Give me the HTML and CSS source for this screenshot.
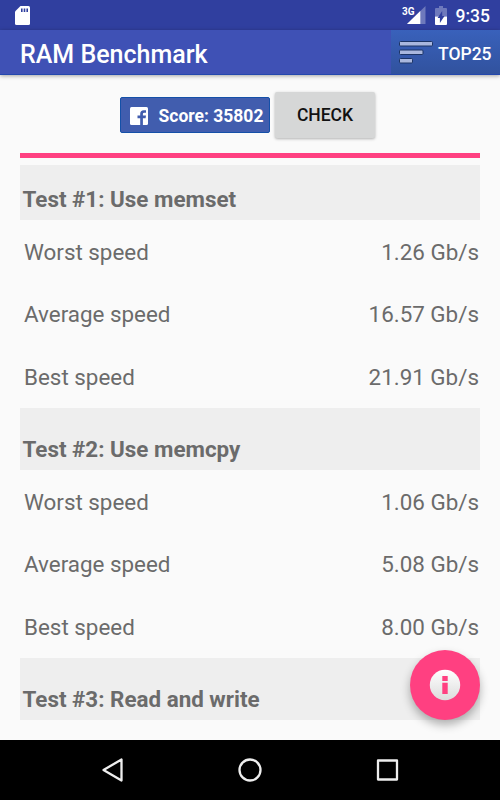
FILE: index.html
```
<!DOCTYPE html>
<html lang="en">
<head>
  <meta charset="UTF-8">
  <meta name="viewport" content="width=device-width, initial-scale=1.0">
  <title>RAM Benchmark</title>
  <link rel="stylesheet" href="styles.css">
</head>
<body>
  <div class="status-bar">
    <svg class="sd-card" width="15" height="19" viewBox="0 0 15 19">
      <path d="M5.5 0H13.5Q15 0 15 1.5V17.5Q15 19 13.5 19H1.5Q0 19 0 17.5V5.5Z" fill="#fff"/>
      <path d="M6 2.5h1.6v3.5H6zM8.7 2.5h1.6v3.5H8.7zM11.4 2.5H13v3.5h-1.6z" fill="#303f9f"/>
    </svg>
    <div class="status-icons">
      <span class="network">3G</span>
      <svg class="signal" width="19" height="18" viewBox="0 0 19 18">
        <path d="M18.5 0V18H0Z" fill="#fff" opacity=".3"/>
        <path d="M13.3 5V18H0Z" fill="#fff"/>
      </svg>
      <svg class="battery" width="12" height="19" viewBox="0 0 12 19">
        <path d="M4 0h4v2h3q1 0 1 1v7.5H0V3q0-1 1-1h3z" fill="#fff" opacity=".3"/>
        <path d="M0 10.5h12V18q0 1-1 1H1q-1 0-1-1z" fill="#fff"/>
        <path d="M7.2 5v5h2.3L4.9 17v-5H2.6z" fill="#303f9f"/>
      </svg>
      <span class="clock">9:35</span>
    </div>
  </div>

  <header>
    <h1>RAM Benchmark</h1>
    <div class="top-btn">
      <svg width="34" height="23" viewBox="0 0 34 23" fill="#a9b7de" stroke="#1d3567">
        <rect x=".5" y=".5" width="33" height="4.5" rx="1"/>
        <rect x=".5" y="9" width="23.5" height="4.5" rx="1"/>
        <rect x=".5" y="17.5" width="13" height="4.5" rx="1"/>
      </svg>
      <span>TOP25</span>
    </div>
  </header>

  <main>
    <div class="actions">
      <div class="score-btn">
        <svg width="18" height="18" viewBox="0 0 18 18">
          <rect width="18" height="18" rx="1.5" fill="#fff"/>
          <path d="M10.2 18v-6.8H7.5V8.5h2.7V6.8q0-3.6 3.6-3.6h2.2v2.6h-1.7q-1.4 0-1.4 1.3v1.4H16l-.4 2.7h-2.7V18z" fill="#415dae"/>
        </svg>
        <span>Score: 35802</span>
      </div>
      <button class="check-btn">CHECK</button>
    </div>
    <div class="progress"></div>

    <h2 class="first">Test #1: Use memset</h2>
    <div class="row"><span>Worst speed</span><span>1.26 Gb/s</span></div>
    <div class="row"><span>Average speed</span><span>16.57 Gb/s</span></div>
    <div class="row"><span>Best speed</span><span>21.91 Gb/s</span></div>

    <h2>Test #2: Use memcpy</h2>
    <div class="row"><span>Worst speed</span><span>1.06 Gb/s</span></div>
    <div class="row"><span>Average speed</span><span>5.08 Gb/s</span></div>
    <div class="row"><span>Best speed</span><span>8.00 Gb/s</span></div>

    <h2>Test #3: Read and write</h2>
  </main>

  <div class="fab">
    <svg width="32" height="32" viewBox="0 0 32 32">
      <defs>
        <linearGradient id="shine" x1="0" y1="0" x2="0" y2="1">
          <stop offset="0" stop-color="#fff"/>
          <stop offset="1" stop-color="#dcdcdc"/>
        </linearGradient>
      </defs>
      <circle cx="16" cy="16" r="15.2" fill="url(#shine)"/>
      <path d="M13.3 7h5.4v5h-5.4zM13.3 13.8h5.4v11.2h-5.4z" fill="#ff4081"/>
    </svg>
  </div>

  <nav>
    <svg width="24" height="24" viewBox="0 0 24 24"><path d="M20.5 1.5V22.5L2.5 12Z"/></svg>
    <svg width="24" height="24" viewBox="0 0 24 24"><circle cx="12" cy="12" r="10.5"/></svg>
    <svg width="24" height="24" viewBox="0 0 24 24"><rect x="3" y="2.5" width="19" height="19"/></svg>
  </nav>
</body>
</html>
```
FILE: styles.css
```
* {
  margin: 0;
  padding: 0;
  box-sizing: border-box;
  font-family: Roboto, sans-serif;
}

body {
  width: 500px;
  height: 800px;
  display: flex;
  flex-direction: column;
  position: relative;
  overflow: hidden;
  background: #fafafa;
  color: #6b6b6b;
}

svg {
  display: block;
  flex: none;
}

.status-bar {
  height: 30px;
  padding: 0 10px 0 15px;
  display: flex;
  align-items: center;
  justify-content: space-between;
  background: #303f9f;
  color: #fff;
}

.status-icons {
  display: flex;
  align-items: center;
}

.network {
  font-size: 10px;
  font-weight: bold;
  margin: -8px -8px 0 0;
}

.signal {
  margin-right: 9px;
}

.battery {
  margin-right: 9px;
}

.clock {
  font-size: 17.5px;
  font-weight: 500;
  line-height: 30px;
  padding-top: 2px;
}

header {
  height: 45px;
  padding-left: 20px;
  display: flex;
  align-items: center;
  justify-content: space-between;
  background: #3f51b5;
  color: #fff;
  border-bottom: 1px solid #2448ae;
  box-shadow: 0 1px 4px rgba(0, 0, 0, 0.35);
}

h1 {
  font-size: 25px;
  font-weight: 500;
  padding-top: 4px;
}

.top-btn {
  width: 109px;
  height: 44px;
  padding-left: 8px;
  display: flex;
  align-items: center;
  gap: 5px;
  background: linear-gradient(#3961bb, #31529e);
  font-size: 17.5px;
  font-weight: 500;
}

.top-btn svg {
  margin-top: 1px;
}

.top-btn span {
  padding-top: 3px;
}

main {
  height: 665px;
  padding: 0 20px;
}

.actions {
  height: 77.5px;
  padding-top: 3px;
  display: flex;
  align-items: center;
  justify-content: center;
  gap: 5px;
  margin-left: -5px;
}

.score-btn {
  width: 150px;
  height: 36px;
  padding-left: 9px;
  display: flex;
  align-items: center;
  gap: 10.5px;
  padding-top: 1px;
  background: #415dae;
  border: 1px solid #1450a8;
  border-radius: 2px;
  color: #fff;
  font-size: 17.5px;
  font-weight: bold;
  white-space: nowrap;
}

.check-btn {
  width: 100px;
  height: 46px;
  border: none;
  border-radius: 2px;
  background: #d6d7d7;
  box-shadow: 0 1px 3px rgba(0, 0, 0, 0.3);
  color: #111;
  font-size: 17.5px;
  font-weight: 500;
}

.progress {
  height: 5px;
  background: #ff4081;
}

h2 {
  height: 62.5px;
  padding: 0 2.5px 8px;
  display: flex;
  align-items: flex-end;
  background: #eee;
  font-size: 22.4px;
  font-weight: bold;
}

h2.first {
  height: 55px;
  margin-top: 7.5px;
}

.row {
  height: 62.5px;
  padding: 1px 1px 0 4px;
  display: flex;
  align-items: center;
  justify-content: space-between;
  font-size: 22.4px;
}

.fab {
  position: absolute;
  left: 410px;
  top: 650px;
  width: 70px;
  height: 70px;
  display: flex;
  align-items: center;
  justify-content: center;
  border-radius: 50%;
  background: #ff4081;
  box-shadow: 0 5px 10px rgba(0, 0, 0, 0.3);
}

nav {
  height: 60px;
  padding: 0 101px;
  display: flex;
  align-items: center;
  justify-content: space-between;
  background: #000;
}

nav svg {
  fill: none;
  stroke: #eee;
  stroke-width: 2.3;
  stroke-linejoin: round;
}
```
